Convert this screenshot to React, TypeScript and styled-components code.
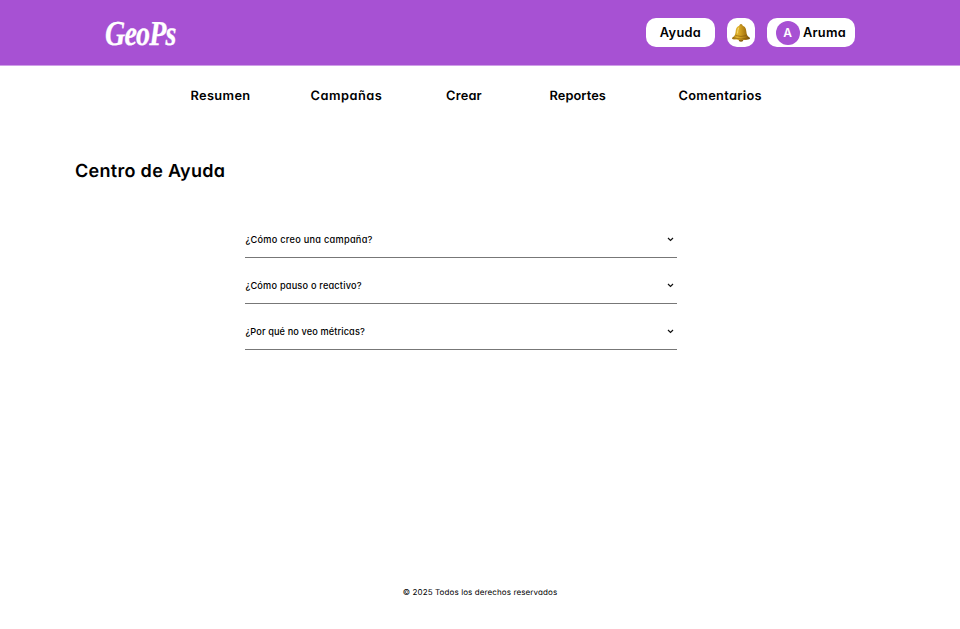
import React from 'react';
import styled, { createGlobalStyle } from 'styled-components';

const GlobalStyle = createGlobalStyle`
  * { box-sizing: border-box; }
  body { margin: 0; background: #fff; color: #000; font-family: Inter, "Open Sans", sans-serif; font-feature-settings: "cv11" 1; text-rendering: geometricPrecision; }
  button { font: inherit; color: inherit; border: 0; padding: 0; background: none; font-feature-settings: inherit; }
`;

const Page = styled.div`
  height: 629px;
  display: flex;
  flex-direction: column;
`;

const Header = styled.header`
  height: 66px;
  flex: none;
  background: #a751d3;
  border-bottom: 1px solid #cf9fe7;
  display: flex;
  align-items: center;
  justify-content: space-between;
  padding: 0 105px;
`;

const Logo = styled.div`
  color: #fff;
  font: italic 700 35px/40px "Liberation Serif", serif;
  letter-spacing: -1px;
  white-space: nowrap;
  transform: scaleX(0.8);
  transform-origin: left center;
  -webkit-text-stroke: 0.3px #fff;
  padding-top: 2px;
`;

const Actions = styled.div`
  display: flex;
  gap: 12px;
`;

const Pill = styled.button<{ $width: number }>`
  width: ${(p) => p.$width}px;
  height: 29px;
  border-radius: 10px;
  background: #fff;
  display: flex;
  align-items: center;
  justify-content: center;
  gap: 3px;
  font-weight: 600;
  font-size: 12.8px;
  letter-spacing: 0.3px;
`;

const Avatar = styled.span`
  width: 24px;
  height: 24px;
  border-radius: 50%;
  background: #a751d3;
  color: #fff;
  font-size: 12px;
  display: grid;
  place-items: center;
`;

const Nav = styled.nav`
  display: grid;
  grid-template-columns: 120px 135.5px 103.5px 129px auto;
  padding: 21px 0 0 190.5px;
  line-height: 20px;
`;

const Label = styled.a<{ $spacing: number }>`
  display: block;
  font-weight: 600;
  font-size: 12.8px;
  letter-spacing: ${(p) => p.$spacing}px;
  white-space: nowrap;
`;

const Title = styled.h1`
  margin: 51px 0 0 75px;
  font-size: 18px;
  line-height: 28px;
  font-weight: 600;
  letter-spacing: 0.3px;
`;

const Questions = styled.section`
  width: 431.5px;
  margin: 26px 0 0 245.4px;
`;

const Question = styled.button<{ $spacing: number }>`
  width: 100%;
  height: 46px;
  padding: 18px 3px 9px 0;
  border-bottom: 1px solid #777;
  display: flex;
  align-items: center;
  justify-content: space-between;
  font-size: 9.2px;
  line-height: 17px;
  font-weight: 500;
  letter-spacing: ${(p) => p.$spacing}px;
`;

const Footer = styled.footer`
  margin-top: auto;
  padding-bottom: 29px;
  text-align: center;
  font-size: 8px;
  line-height: 16px;
  letter-spacing: 0.11px;
`;

const Bell = () => (
  <svg width="20" height="20" viewBox="0 0 20 20" aria-hidden="true">
    <defs>
      <linearGradient id="brass" x1="0" x2="1">
        <stop offset="0" stopColor="#9b6c09" />
        <stop offset=".28" stopColor="#e3b62f" />
        <stop offset=".45" stopColor="#d3a122" />
        <stop offset=".75" stopColor="#a87710" />
        <stop offset="1" stopColor="#70490a" />
      </linearGradient>
    </defs>
    <ellipse cx="10" cy="16.8" rx="2.4" ry="1.9" fill="#82580d" />
    <circle cx="10" cy="2.4" r="1.5" fill="#b4861b" />
    <path d="M10 2.5C6.5 2.5 5 4.8 4.7 8.2C4.4 11.8 3.6 13 1.4 14.5Q.7 15.2 1.3 16C5 17.6 15 17.6 18.7 16Q19.3 15.2 18.6 14.5C16.4 13 15.6 11.8 15.3 8.2C15 4.8 13.5 2.5 10 2.5Z" fill="url(#brass)" />
    <path d="M2 14.8Q10 17.5 18 14.8M4.5 12.5Q10 14.4 15.5 12.5" fill="none" stroke="#80560b" strokeWidth=".6" />
    <path d="M7.5 5Q6.7 7 6.5 10" fill="none" stroke="#f5dc79" strokeWidth=".9" strokeLinecap="round" />
  </svg>
);

const Chevron = () => (
  <svg width="7" height="5" viewBox="0 0 7 5" aria-hidden="true">
    <path d="M1 1L3.5 3.5L6 1" fill="none" stroke="#111" strokeWidth="1.2" />
  </svg>
);

const links = [
  { text: 'Resumen', spacing: 0.35 },
  { text: 'Campañas', spacing: 0.5 },
  { text: 'Crear', spacing: 0.2 },
  { text: 'Reportes', spacing: 0.08 },
  { text: 'Comentarios', spacing: 0.32 },
];

const questions = [
  { text: '¿Cómo creo una campaña?', spacing: 0.27 },
  { text: '¿Cómo pauso o reactivo?', spacing: 0.2 },
  { text: '¿Por qué no veo métricas?', spacing: 0.11 },
];

export default function App() {
  return (
    <Page>
      <GlobalStyle />
      <Header>
        <Logo>GeoPs</Logo>
        <Actions>
          <Pill $width={69}>Ayuda</Pill>
          <Pill $width={28} aria-label="Notificaciones"><Bell /></Pill>
          <Pill $width={88}><Avatar>A</Avatar>Aruma</Pill>
        </Actions>
      </Header>
      <Nav>
        {links.map((l) => <Label key={l.text} $spacing={l.spacing}>{l.text}</Label>)}
      </Nav>
      <Title>Centro de Ayuda</Title>
      <Questions>
        {questions.map((q) => (
          <Question key={q.text} $spacing={q.spacing}><span>{q.text}</span><Chevron /></Question>
        ))}
      </Questions>
      <Footer>© 2025 Todos los derechos reservados</Footer>
    </Page>
  );
}
